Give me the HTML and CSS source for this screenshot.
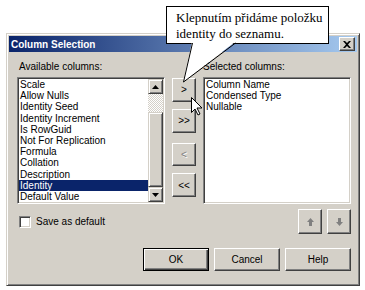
FILE: index.html
```html
<!DOCTYPE html>
<html lang="cs">
<head>
  <meta charset="UTF-8" />
  <title>Column Selection</title>
  <link rel="stylesheet" href="styles.css">
</head>
<body>
  <div class="dialog">
    <div class="titlebar">
      <span class="title">Column Selection</span>
      <span class="close">
        <svg width="8" height="7" viewBox="0 0 8 7"><path d="M0 0h2l2 2 2-2h2L5 3.5 8 7H6L4 5 2 7H0l3-3.5z" fill="#000"/></svg>
      </span>
    </div>
    <div class="content">
      <div class="columns">
        <div class="label">Available columns:</div>
        <div></div>
        <div class="label right">Selected columns:</div>

        <div class="listbox">
          <ul class="items">
            <li>Scale</li>
            <li>Allow Nulls</li>
            <li>Identity Seed</li>
            <li>Identity Increment</li>
            <li>Is RowGuid</li>
            <li>Not For Replication</li>
            <li>Formula</li>
            <li>Collation</li>
            <li>Description</li>
            <li class="selected">Identity</li>
            <li>Default Value</li>
          </ul>
          <div class="scrollbar">
            <div class="sb-btn"><svg width="7" height="4" viewBox="0 0 7 4"><path d="M3.5 0L7 4H0z" fill="#000"/></svg></div>
            <div class="sb-track"></div>
            <div class="sb-thumb"></div>
            <div class="sb-btn"><svg width="7" height="4" viewBox="0 0 7 4"><path d="M0 0h7L3.5 4z" fill="#000"/></svg></div>
          </div>
        </div>

        <div class="movers">
          <button class="btn move">&gt;</button>
          <button class="btn move">&gt;&gt;</button>
          <button class="btn move disabled">&lt;</button>
          <button class="btn move">&lt;&lt;</button>
        </div>

        <div class="listbox">
          <ul class="items">
            <li>Column Name</li>
            <li>Condensed Type</li>
            <li>Nullable</li>
          </ul>
        </div>
      </div>

      <div class="options">
        <label class="check"><span class="box"></span>Save as default</label>
        <div class="order">
          <button class="btn small">
            <svg width="7" height="8" viewBox="0 0 7 8"><path d="M3.5 0L7 4H5v4H2V4H0z" fill="#808080"/></svg>
          </button>
          <button class="btn small">
            <svg width="7" height="8" viewBox="0 0 7 8"><path d="M2 0h3v4h2L3.5 8 0 4h2z" fill="#808080"/></svg>
          </button>
        </div>
      </div>

      <div class="footer">
        <button class="btn action default">OK</button>
        <button class="btn action">Cancel</button>
        <button class="btn action">Help</button>
      </div>
    </div>
  </div>

  <div class="callout">Klepnutím přidáme položku<br>identity do seznamu.</div>
  <svg class="tail" width="60" height="42" viewBox="0 0 60 42">
    <polygon points="12,0 55,0 3,40" fill="#fff"/>
    <path d="M12.5 1L3.5 40L55.5 1" fill="none" stroke="#000" stroke-width="1"/>
  </svg>
  <svg class="cursor" width="13" height="20" viewBox="0 0 13 20">
    <path d="M0.5 0.5v15l3.5-3.5 3 6 2-1-3-6h5z" fill="#fff" stroke="#000" stroke-width="1" stroke-linejoin="miter"/>
  </svg>
</body>
</html>
```

FILE: styles.css
```css
body {
  margin: 0;
  background: #fff;
  font-family: 'Liberation Sans', Arial, sans-serif;
  font-size: 10px;
  color: #000;
  position: relative;
  width: 365px;
  height: 290px;
  overflow: hidden;
}
.dialog {
  box-sizing: border-box;
  width: 354px;
  height: 253px;
  margin: 33px 0 0 6px;
  background: #d4d0c8;
  border: 1px solid;
  border-color: #d4d0c8 #404040 #404040 #d4d0c8;
  box-shadow: inset 1px 1px #fff, inset -1px -1px #808080;
  padding: 2px;
}
.titlebar {
  height: 16px;
  background: linear-gradient(to right, #0a246a, #a6caf0);
  display: flex;
  align-items: center;
  justify-content: space-between;
  padding: 0 2px 0 2px;
  color: #fff;
  font-weight: bold;
}
.close {
  box-sizing: border-box;
  width: 16px;
  height: 14px;
  background: #d4d0c8;
  border: 1px solid;
  border-color: #fff #404040 #404040 #fff;
  box-shadow: inset -1px -1px #808080;
  display: flex;
  align-items: center;
  justify-content: center;
}
.content {
  padding: 8px 6px 0 8px;
}
.columns {
  display: grid;
  grid-template-columns: 148px 24px 148px;
  grid-template-rows: 13px 127px;
  column-gap: 7px;
  row-gap: 4px;
}
.label {
  line-height: 13px;
  padding-left: 2px;
}
.label.right {
  padding-left: 0;
}
.listbox {
  box-sizing: border-box;
  background: #fff;
  border: 1px solid;
  border-color: #808080 #fff #fff #808080;
  box-shadow: inset 1px 1px #404040, inset -1px -1px #d4d0c8;
  padding: 1px;
  display: flex;
}
.items {
  list-style: none;
  margin: 0;
  padding: 0;
  flex: 1;
  overflow: hidden;
}
.items li {
  height: 11.2px;
  line-height: 11.2px;
  padding-left: 1px;
  white-space: nowrap;
}
.items li.selected {
  background: #0a246a;
  color: #fff;
}
.scrollbar {
  width: 15px;
  display: flex;
  flex-direction: column;
}
.sb-btn,
.sb-thumb {
  box-sizing: border-box;
  background: #d4d0c8;
  border: 1px solid;
  border-color: #d4d0c8 #404040 #404040 #d4d0c8;
  box-shadow: inset 1px 1px #fff, inset -1px -1px #808080;
}
.sb-btn {
  height: 15px;
  display: flex;
  align-items: center;
  justify-content: center;
}
.sb-track {
  height: 18px;
  background-image: conic-gradient(#fff 25%, #d4d0c8 0 50%, #fff 0 75%, #d4d0c8 0);
  background-size: 2px 2px;
}
.sb-thumb {
  flex: 1;
}
.btn {
  box-sizing: border-box;
  background: #d4d0c8;
  border: 1px solid;
  border-color: #fff #404040 #404040 #fff;
  box-shadow: inset -1px -1px #808080;
  font: inherit;
  color: #000;
  padding: 0;
  display: flex;
  align-items: center;
  justify-content: center;
}
.movers {
  display: flex;
  flex-direction: column;
  padding-top: 1px;
}
.move {
  width: 24px;
  height: 25px;
  margin-bottom: 7px;
}
.move:nth-child(2) {
  margin-bottom: 10px;
}
.move.disabled {
  color: #808080;
  text-shadow: 1px 1px #fff;
}
.options {
  display: flex;
  align-items: center;
  justify-content: space-between;
  margin-top: 5px;
  height: 25px;
}
.check {
  display: flex;
  align-items: center;
  padding-left: 2px;
}
.box {
  box-sizing: border-box;
  width: 12px;
  height: 12px;
  background: #fff;
  border: 1px solid;
  border-color: #808080 #fff #fff #808080;
  box-shadow: inset 1px 1px #404040, inset -1px -1px #d4d0c8;
  margin-right: 5px;
}
.order {
  display: flex;
  gap: 5px;
}
.small {
  width: 24px;
  height: 25px;
}
.footer {
  display: flex;
  justify-content: flex-end;
  gap: 5px;
  margin-top: 14px;
}
.action {
  width: 66px;
  height: 23px;
}
.action.default {
  border-color: #000;
  box-shadow: inset 1px 1px #fff, inset -1px -1px #404040, inset -2px -2px #808080;
}
.callout {
  position: absolute;
  left: 166px;
  top: 6px;
  box-sizing: border-box;
  width: 163px;
  height: 38px;
  background: #fff;
  border: 1px solid #000;
  font-family: 'Liberation Serif', 'Times New Roman', serif;
  font-size: 13px;
  line-height: 16px;
  padding: 3px 0 0 9px;
  white-space: nowrap;
}
.tail {
  position: absolute;
  left: 180px;
  top: 42px;
}
.cursor {
  position: absolute;
  left: 191px;
  top: 97px;
}
```
